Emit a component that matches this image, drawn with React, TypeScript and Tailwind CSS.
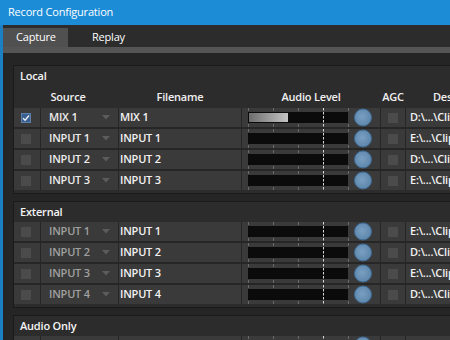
import React from "react";

type Row = { checked?: boolean; source: string; file: string; level?: number; dest: string; dim?: boolean };

const localRows: Row[] = [
  { checked: true, source: "MIX 1", file: "MIX 1", level: 39, dest: "D:\\...\\Clips\\" },
  { source: "INPUT 1", file: "INPUT 1", dest: "E:\\...\\Clips\\" },
  { source: "INPUT 2", file: "INPUT 2", dest: "D:\\...\\Clips\\" },
  { source: "INPUT 3", file: "INPUT 3", dest: "E:\\...\\Clips\\" },
];

const externalRows: Row[] = [
  { source: "INPUT 1", file: "INPUT 1", dest: "E:\\...\\Clips\\", dim: true },
  { source: "INPUT 2", file: "INPUT 2", dest: "D:\\...\\Clips\\", dim: true },
  { source: "INPUT 3", file: "INPUT 3", dest: "E:\\...\\Clips\\", dim: true },
  { source: "INPUT 4", file: "INPUT 4", dest: "D:\\...\\Clips\\", dim: true },
];

function Meter({ level = 0 }: { level?: number }) {
  const ticks = [6, 31, 56, 106];
  return (
    <svg width="138" height="19" viewBox="0 0 138 19" className="block">
      <defs>
        <linearGradient id="lvl" x1="0" x2="1" y1="0" y2="0">
          <stop offset="0" stopColor="#6e6e6e" />
          <stop offset="1" stopColor="#c4c4c4" />
        </linearGradient>
        <radialGradient id="knob" cx="0.45" cy="0.45" r="0.6">
          <stop offset="0" stopColor="#7aa0c2" />
          <stop offset="1" stopColor="#5a84a9" />
        </radialGradient>
      </defs>
      {ticks.map((x) => (
        <g key={x}>
          <rect x={x} y={0} width="1" height="3" fill="#6a6a6a" />
          <rect x={x} y={16} width="1" height="3" fill="#6a6a6a" />
        </g>
      ))}
      <rect x="6" y="4" width="100" height="11" fill="#0b0b0b" />
      {level > 0 && <rect x="7" y="5" width={level} height="9" fill="url(#lvl)" />}
      {[0, 4, 8, 12, 16].map((y) => (
        <rect key={y} x="81" y={y} width="1" height="2.5" fill="#d8d8d8" />
      ))}
      <circle cx="121" cy="9.5" r="8.5" fill="url(#knob)" stroke="#3f6a93" strokeWidth="1" />
    </svg>
  );
}

function Check({ checked }: { checked?: boolean }) {
  if (checked)
    return (
      <div className="w-[10px] h-[10px] bg-[#3a5f8e] border border-[#5b80ad] flex items-center justify-center">
        <svg width="8" height="8" viewBox="0 0 8 8">
          <path d="M1 4.2 L3.1 6.3 L7 1.5" stroke="#e8eef5" strokeWidth="1.4" fill="none" />
        </svg>
      </div>
    );
  return <div className="w-[10px] h-[10px] bg-[#4b4b4b]" />;
}

function DataRow({ r }: { r: Row }) {
  return (
    <div className="flex h-[19px] gap-x-px">
      <div className="w-[26px] bg-[#3a3a3a] flex items-center pl-[7px]">
        <Check checked={r.checked} />
      </div>
      <div className="w-[77px] bg-[#3a3a3a] flex items-center pl-[8px] relative">
        <span className={r.dim ? "text-[#a0a0a0]" : "text-[#ececec]"}>{r.source}</span>
        <svg width="8" height="5" viewBox="0 0 8 5" className="absolute left-[61px] top-[7px]">
          <path d="M0 0 L8 0 L4 4.5 Z" fill="#5c5c5c" />
        </svg>
      </div>
      <div className="w-[122px] bg-[#3a3a3a] flex items-center pl-[1px] text-[#f2f2f2]">{r.file}</div>
      <div className="w-[138px] bg-[#3a3a3a] flex items-center">
        <Meter level={r.level} />
      </div>
      <div className="w-[24px] bg-[#3a3a3a] flex items-center pl-[7px]">
        <Check />
      </div>
      <div className="flex-1 bg-[#3a3a3a] flex items-center pl-[4px] text-[#f2f2f2] whitespace-nowrap overflow-hidden">
        {r.dest}
      </div>
    </div>
  );
}

function Panel({ title, header, rows }: { title: string; header?: boolean; rows: Row[] }) {
  return (
    <div className="border border-[#1a1a1a] border-r-0 bg-[#2c2c2c] pb-[3px] mb-[7px]">
      <div className="h-[20px] flex items-center pl-[6px] text-[#f4f4f4]">{title}</div>
      {header && (
        <div className="h-[22px] flex items-center gap-x-px text-[#f0f0f0]">
          <div className="w-[104px] text-center pl-[4px]">Source</div>
          <div className="w-[122px] text-center">Filename</div>
          <div className="w-[138px] text-center">Audio Level</div>
          <div className="w-[24px] text-center">AGC</div>
          <div className="flex-1 pl-[27px] whitespace-nowrap overflow-hidden">Destination</div>
        </div>
      )}
      <div className="flex flex-col gap-y-[2px] bg-[#262626]">
        {rows.map((r, i) => (
          <DataRow key={i} r={r} />
        ))}
      </div>
    </div>
  );
}

export default function App() {
  return (
    <div
      className="w-[450px] h-[340px] overflow-hidden flex flex-col bg-[#1b7fc4] text-[11px] font-semibold tracking-[-0.2px]"
      style={{ fontFamily: '"Open Sans", "Noto Sans", sans-serif' }}
    >
      <div className="h-[25px] shrink-0 bg-[#1d8cd6] flex items-center pl-[8px] text-white font-normal text-[11px]">
        Record Configuration
      </div>
      <div className="flex-1 flex min-h-0">
        <div className="w-[3px] shrink-0 bg-[#1b7fc4]" />
        <div className="flex-1 flex flex-col bg-[#252525] min-w-0">
          <div className="h-[22px] shrink-0 bg-[#2c2c2c] flex items-end">
            <div className="w-[65px] h-[19px] bg-[#505050] flex items-center pl-[13px] text-white font-normal">Capture</div>
            <div className="pl-[24px] h-[19px] flex items-center text-white font-normal">Replay</div>
          </div>
          <div className="h-[6px] shrink-0 bg-[#555555]" />
          <div className="pt-[12px] pl-[10px]">
            <Panel title="Local" header rows={localRows} />
            <Panel title="External" rows={externalRows} />
            <Panel
              title="Audio Only"
              rows={[{ source: "", file: "", dest: "" }]}
            />
          </div>
        </div>
      </div>
    </div>
  );
}
